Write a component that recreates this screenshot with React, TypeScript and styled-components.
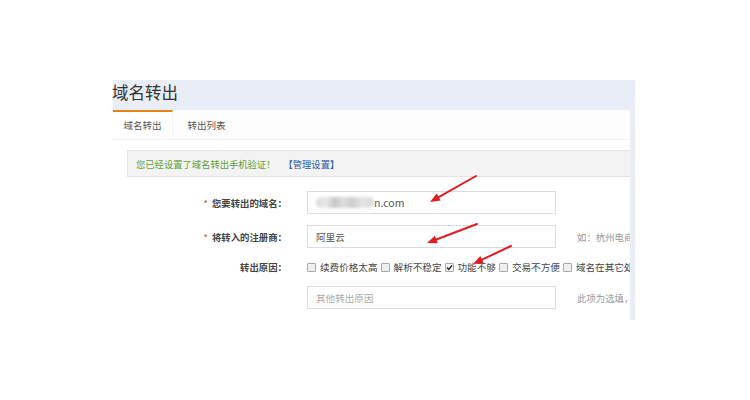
import React from "react";
import styled, { createGlobalStyle } from "styled-components";

const GlobalStyle = createGlobalStyle`
  html, body {
    margin: 0;
    padding: 0;
    background: #ffffff;
  }
  body {
    font-family: "Noto Sans CJK SC", "Liberation Sans", sans-serif;
    color: #333;
  }
`;

const Page = styled.div`
  position: relative;
  width: 750px;
  height: 400px;
  padding: 80px 0 0 113px;
  box-sizing: border-box;
`;

const Frame = styled.div`
  width: 522px;
  height: 240px;
  background: #e9edf5;
  display: flex;
  flex-direction: column;
`;

const Header = styled.div`
  height: 30px;
  flex-shrink: 0;
`;

const Title = styled.h1`
  margin: 0 0 0 -1px;
  font-size: 16.5px;
  font-weight: normal;
  line-height: 25px;
  color: #333;
`;

const Content = styled.div`
  width: 517px;
  flex: 1;
  background: #ffffff;
  overflow: hidden;
`;

const TabBar = styled.div`
  display: flex;
  height: 30px;
  background: #fdfdfd;
  border-bottom: 1px solid #f1f1f1;
  box-sizing: border-box;
`;

const Tab = styled.div<{ $active?: boolean }>`
  width: 60px;
  box-sizing: border-box;
  text-align: center;
  font-size: 9.5px;
  line-height: 27px;
  color: #555;
  background: ${(p) => (p.$active ? "#ffffff" : "transparent")};
  border-top: 2px solid ${(p) => (p.$active ? "#e8801c" : "transparent")};
  border-right: 1px solid ${(p) => (p.$active ? "#f3f3f3" : "transparent")};
  margin-right: ${(p) => (p.$active ? "4px" : "0")};
`;

const Alert = styled.div`
  margin: 10px 0 0 14px;
  width: 520px;
  height: 27px;
  box-sizing: border-box;
  background: #f3f3f3;
  border: 1px solid #e3e3e3;
  padding-left: 8px;
  display: flex;
  align-items: center;
  font-size: 9.3px;
  white-space: nowrap;
`;

const AlertText = styled.span`
  color: #5d9e3a;
`;

const AlertLink = styled.a`
  color: #2b5ba8;
  margin-left: 8px;
  text-decoration: none;
`;

const Form = styled.div`
  margin-top: 14px;
  display: flex;
  flex-direction: column;
  gap: 11px;
`;

const Row = styled.div`
  display: flex;
  align-items: center;
  white-space: nowrap;
`;

const Label = styled.div`
  width: 174px;
  flex-shrink: 0;
  text-align: right;
  font-size: 9.4px;
  font-weight: bold;
  color: #444;
`;

const Star = styled.span`
  color: #d9534f;
  margin-right: 4px;
  font-weight: normal;
`;

const Field = styled.div`
  margin-left: 20px;
  width: 249px;
  height: 23px;
  flex-shrink: 0;
  box-sizing: border-box;
  border: 1px solid #dcdcdc;
  padding-left: 8px;
  display: flex;
  align-items: center;
  font-size: 9.6px;
  color: #555;
`;

const Placeholder = styled.span`
  color: #aaa;
`;

const Blur = styled.span`
  display: inline-block;
  width: 58px;
  height: 11px;
  border-radius: 5px;
  background: linear-gradient(
    90deg,
    #dcdcdc 0%,
    #e8e8e8 18%,
    #c6c6c6 32%,
    #dedede 48%,
    #cdcdcd 62%,
    #e6e6e6 80%,
    #d8d8d8 100%
  );
  filter: blur(1.5px);
`;

const DomainTail = styled.span`
  font-size: 10.5px;
  color: #555;
`;

const Hint = styled.div`
  margin-left: 21px;
  font-size: 9.4px;
  color: #999;
`;

const Checks = styled.div`
  margin-left: 20px;
  display: flex;
  align-items: center;
  gap: 3px;
  height: 16px;
`;

const CheckItem = styled.label`
  display: inline-flex;
  align-items: center;
  gap: 4px;
  font-size: 9.6px;
  color: #444;
`;

const Box = styled.span<{ $checked?: boolean }>`
  width: 9px;
  height: 9px;
  box-sizing: border-box;
  border: 1px solid #a8a8a8;
  border-radius: 1px;
  background: ${(p) => (p.$checked ? "#f4f4f4" : "#efefef")};
  display: inline-flex;
  align-items: center;
  justify-content: center;
`;

const Overlay = styled.svg`
  position: absolute;
  left: 0;
  top: 0;
  pointer-events: none;
`;

type Pt = [number, number];

const Arrow = ({ from, to }: { from: Pt; to: Pt }) => {
  const dx = to[0] - from[0];
  const dy = to[1] - from[1];
  const len = Math.hypot(dx, dy);
  const ux = dx / len;
  const uy = dy / len;
  const head = 10;
  const half = 4;
  const bx = to[0] - ux * head;
  const by = to[1] - uy * head;
  const px = -uy * half;
  const py = ux * half;
  return (
    <g>
      <line x1={from[0]} y1={from[1]} x2={bx} y2={by} stroke="#e01b22" strokeWidth={2} strokeLinecap="round" />
      <polygon
        points={`${to[0]},${to[1]} ${bx + px},${by + py} ${bx - px},${by - py}`}
        fill="#e01b22"
      />
    </g>
  );
};

const reasons = [
  { text: "续费价格太高", checked: false },
  { text: "解析不稳定", checked: false },
  { text: "功能不够", checked: true },
  { text: "交易不方便", checked: false },
  { text: "域名在其它处管理更方便", checked: false },
];

export default function App() {
  return (
    <>
      <GlobalStyle />
      <Page>
        <Frame>
          <Header>
            <Title>域名转出</Title>
          </Header>
          <Content>
            <TabBar>
              <Tab $active>域名转出</Tab>
              <Tab>转出列表</Tab>
            </TabBar>
            <Alert>
              <AlertText>您已经设置了域名转出手机验证！</AlertText>
              <AlertLink>【管理设置】</AlertLink>
            </Alert>
            <Form>
              <Row>
                <Label>
                  <Star>*</Star>您要转出的域名：
                </Label>
                <Field>
                  <Blur />
                  <DomainTail>n.com</DomainTail>
                </Field>
              </Row>
              <Row>
                <Label>
                  <Star>*</Star>将转入的注册商：
                </Label>
                <Field>阿里云</Field>
                <Hint>如：杭州电商网络科技有限公司</Hint>
              </Row>
              <Row>
                <Label>转出原因：</Label>
                <Checks>
                  {reasons.map((r) => (
                    <CheckItem key={r.text}>
                      <Box $checked={r.checked}>
                        {r.checked && (
                          <svg width="7" height="7" viewBox="0 0 7 7">
                            <path d="M1 3.6 L2.8 5.4 L6 1.4" fill="none" stroke="#222" strokeWidth="1.4" />
                          </svg>
                        )}
                      </Box>
                      {r.text}
                    </CheckItem>
                  ))}
                </Checks>
              </Row>
              <Row>
                <Label />
                <Field>
                  <Placeholder>其他转出原因</Placeholder>
                </Field>
                <Hint>此项为选填，最多输入50个字</Hint>
              </Row>
            </Form>
          </Content>
        </Frame>
        <Overlay width="750" height="400" viewBox="0 0 750 400">
          <Arrow from={[476, 176]} to={[430, 202]} />
          <Arrow from={[477, 224]} to={[427, 243]} />
          <Arrow from={[511, 246]} to={[473, 264]} />
        </Overlay>
      </Page>
    </>
  );
}
